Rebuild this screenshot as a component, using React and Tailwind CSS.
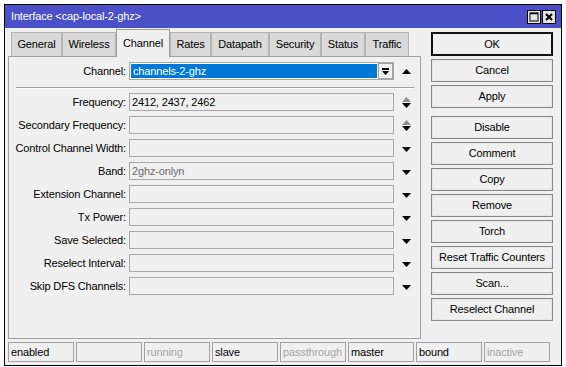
import React from "react";

const tabs = [
  { name: "General", w: "w-[51px]" },
  { name: "Wireless", w: "w-[54px]" },
  { name: "Channel", w: "w-[54px]", active: true },
  { name: "Rates", w: "w-[41px]" },
  { name: "Datapath", w: "w-[58px]" },
  { name: "Security", w: "w-[52px]" },
  { name: "Status", w: "w-[44px]" },
  { name: "Traffic", w: "w-[44px]" },
];

const rows = [
  { label: "Frequency:", value: "2412, 2437, 2462", arrow: "updown" },
  { label: "Secondary Frequency:", value: "", arrow: "updown" },
  { label: "Control Channel Width:", value: "", arrow: "down" },
  { label: "Band:", value: "2ghz-onlyn", arrow: "down", dim: true },
  { label: "Extension Channel:", value: "", arrow: "down" },
  { label: "Tx Power:", value: "", arrow: "down" },
  { label: "Save Selected:", value: "", arrow: "down" },
  { label: "Reselect Interval:", value: "", arrow: "down" },
  { label: "Skip DFS Channels:", value: "", arrow: "down" },
];

const moreButtons = ["Comment", "Copy", "Remove", "Torch", "Reset Traffic Counters", "Scan...", "Reselect Channel"];

const statusCells = [
  { text: "enabled" },
  { text: "" },
  { text: "running", dim: true },
  { text: "slave" },
  { text: "passthrough", dim: true },
  { text: "master" },
  { text: "bound" },
  { text: "inactive", dim: true },
];

const Tri = ({ up, color = "#000" }) => (
  <svg width="9" height="5" viewBox="0 0 9 5">
    {up ? (
      <polygon points="0,5 9,5 4.5,0" fill={color} />
    ) : (
      <polygon points="0,0 9,0 4.5,5" fill={color} />
    )}
  </svg>
);

const Btn = ({ children, primary }) => (
  <div
    className={`h-[23px] w-full flex items-center justify-center bg-[#f0f0f0] text-black ${
      primary
        ? "border-2 border-[#111] h-[24px]"
        : "border border-[#8a8a8a] shadow-[inset_0_0_0_1px_#e6e6e6]"
    }`}
  >
    {children}
  </div>
);

export default function App() {
  return (
    <div
      className="w-[566px] h-[367px] bg-white overflow-hidden text-[11px] leading-none tracking-[-0.15px]"
      style={{ fontFamily: '"Liberation Sans", Arial, sans-serif' }}
    >
      <div className="ml-[4px] mt-[4px] w-[558px] h-[362px] border border-black bg-[#f0f0f0] flex flex-col">
        {/* Title bar */}
        <div className="h-[23px] bg-[#4b50c8] flex items-center pl-[6px] pr-[5px]">
          <span className="text-white text-[11px] flex-1">Interface &lt;cap-local-2-ghz&gt;</span>
          <div className="flex gap-[1px] mt-[1px]">
            <div className="w-[14px] h-[14px] bg-[#e4e4e4] border border-black flex items-center justify-center">
              <svg width="10" height="10" viewBox="0 0 10 10">
                <rect x="1" y="1" width="8" height="8" fill="none" stroke="#000" strokeWidth="1" />
                <line x1="1" y1="1.5" x2="9" y2="1.5" stroke="#000" strokeWidth="1.5" />
              </svg>
            </div>
            <div className="w-[14px] h-[14px] bg-[#e4e4e4] border border-black flex items-center justify-center">
              <svg width="10" height="10" viewBox="0 0 10 10">
                <path d="M2 2 L8 8 M8 2 L2 8" stroke="#000" strokeWidth="2" />
              </svg>
            </div>
          </div>
        </div>

        {/* Body */}
        <div className="flex pl-[3px] pr-[7px] h-[311px]">
          {/* Left: tabs + panel */}
          <div className="w-[413px] flex flex-col">
            <div className="h-[27px] mt-[1px] flex items-end pl-[3px] relative z-10">
              {tabs.map((t) =>
                t.active ? (
                  <div
                    key={t.name}
                    className={`${t.w} h-[28px] -mb-px bg-[#f0f0f0] border border-b-0 border-[#a0a0a0] flex items-start justify-center pt-[8px] text-black`}
                  >
                    {t.name}
                  </div>
                ) : (
                  <div
                    key={t.name}
                    className={`${t.w} h-[24px] bg-[#d9d9d9] border border-b-0 border-[#b4b4b4] flex items-center justify-center text-black`}
                  >
                    {t.name}
                  </div>
                )
              )}
            </div>
            <div className="h-[283px] border border-[#a0a0a0] flex flex-col pt-[5px]">
              {/* Channel row */}
              <div className="flex items-center h-[18px]">
                <div className="w-[117px] text-right text-black">Channel:</div>
                <div className="ml-[3px] w-[265px] h-[18px] border border-[#a8a8a8] flex bg-white">
                  <div className="flex-1 bg-[#0078d7] text-white flex items-center pl-[2px] m-px">
                    channels-2-ghz
                  </div>
                  <div className="w-[15px] bg-[#f0f0f0] border border-[#a0a0a0] flex flex-col items-center justify-center gap-[1px]">
                    <div className="w-[7px] h-[2px] bg-black" />
                    <svg width="7" height="4" viewBox="0 0 7 4">
                      <polygon points="0,0 7,0 3.5,4" fill="#000" />
                    </svg>
                  </div>
                </div>
                <div className="w-[24px] flex justify-center">
                  <Tri up />
                </div>
              </div>

              {/* Separator */}
              <div className="mt-[7px] ml-[7px] mr-[6px] h-px bg-[#a0a0a0]" />
              <div className="ml-[7px] mr-[6px] h-px bg-white" />

              <div className="mt-[4px] flex flex-col gap-[5px]">
                {rows.map((r) => (
                  <div key={r.label} className="flex items-center h-[18px]">
                    <div className="w-[117px] text-right text-black whitespace-nowrap">{r.label}</div>
                    <div
                      className={`ml-[3px] w-[265px] h-[18px] border border-[#a8a8a8] flex items-center pl-[2px] ${
                        r.dim ? "text-[#6d6d6d]" : "text-black"
                      }`}
                    >
                      {r.value}
                    </div>
                    <div className="w-[24px] flex flex-col items-center justify-center gap-[1px]">
                      {r.arrow === "updown" ? (
                        <>
                          <Tri up color="#8c8c8c" />
                          <Tri />
                        </>
                      ) : (
                        <div className="mt-[2px]">
                          <Tri />
                        </div>
                      )}
                    </div>
                  </div>
                ))}
              </div>
            </div>
          </div>

          {/* Right: buttons */}
          <div className="ml-[10px] w-[122px] flex flex-col pt-[4px]">
            <Btn primary>OK</Btn>
            <div className="mt-[3px] flex flex-col gap-[3px]">
              <Btn>Cancel</Btn>
              <Btn>Apply</Btn>
            </div>
            <div className="mt-[8px] flex flex-col gap-[3px]">
              <Btn>Disable</Btn>
              {moreButtons.map((b) => (
                <Btn key={b}>{b}</Btn>
              ))}
            </div>
          </div>
        </div>

        {/* Status bar */}
        <div className="mt-[3px] pl-[3px] flex gap-[2px] h-[20px]">
          {statusCells.map((c, i) => (
            <div
              key={i}
              className={`w-[66px] h-[20px] border border-[#a0a0a0] flex items-center pl-[2px] ${
                c.dim ? "text-[#a6a6a6]" : "text-black"
              }`}
            >
              {c.text}
            </div>
          ))}
        </div>
      </div>
    </div>
  );
}
